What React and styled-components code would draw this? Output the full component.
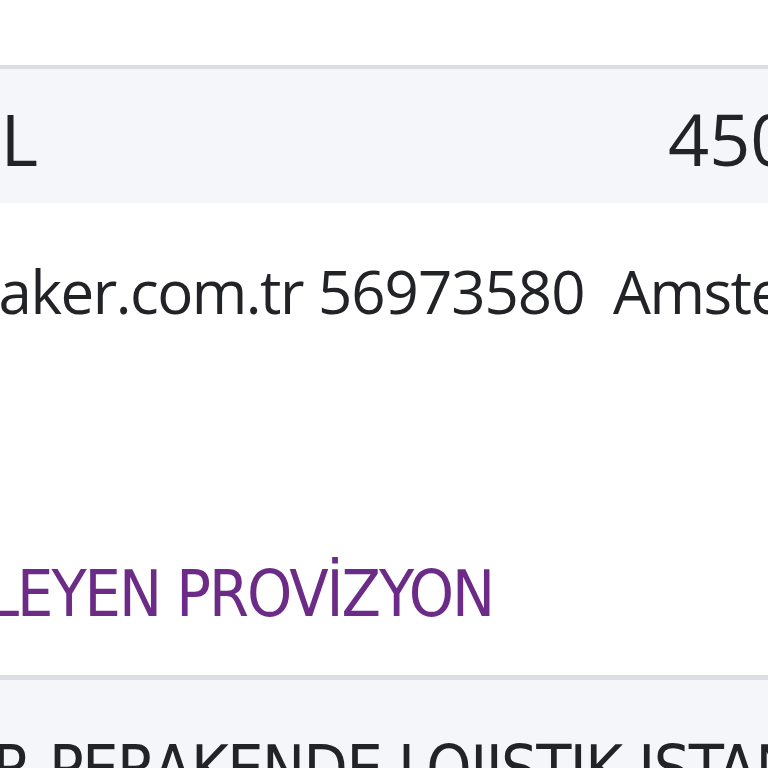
import React from "react";
import styled, { createGlobalStyle } from "styled-components";

const GlobalStyle = createGlobalStyle`
  html, body { margin: 0; padding: 0; background: #ffffff; overflow: hidden; }
  body { font-family: "Open Sans", "Noto Sans", sans-serif; color: #222326; }
`;

const Table = styled.div`
  display: flex;
  flex-direction: column;
  width: 768px;
  overflow: hidden;
`;

const Row = styled.div`
  display: flex;
  flex-direction: column;
  background: ${(p) => (p.$shaded ? "#f5f6f9" : "#ffffff")};
  border-top: ${(p) => (p.$border ? `${p.$border}px solid #dcdee3` : "none")};
  padding: ${(p) => p.$pad || "0"};
  min-height: ${(p) => p.$minH || 0}px;
  box-sizing: border-box;
`;

const Line = styled.div`
  display: flex;
  align-items: baseline;
  white-space: pre;
  font-family: ${(p) =>
    p.$cond
      ? `"DejaVu Sans Condensed", "DejaVu Sans", sans-serif`
      : `"Open Sans", "Noto Sans", sans-serif`};
  font-stretch: ${(p) => (p.$cond ? "condensed" : "normal")};
  font-size: ${(p) => p.$size}px;
  line-height: ${(p) => p.$size}px;
  letter-spacing: ${(p) => p.$ls || 0}px;
  color: ${(p) => p.$color || "#222326"};
  margin-top: ${(p) => p.$mt || 0}px;
`;

/* a cell whose text is aligned to its right edge, so the start of the
   text runs off the left side of the visible crop */
const EndCell = styled.span`
  flex: 0 0 ${(p) => p.$end}px;
  width: ${(p) => p.$end}px;
  min-width: 0;
  display: flex;
  justify-content: flex-end;
  white-space: pre;
`;

const EndText = styled.span`
  flex: 0 0 auto;
  white-space: pre;
`;

const Cell = styled.span`
  flex: ${(p) => (p.$w ? `0 0 ${p.$w}px` : "0 0 auto")};
  min-width: 0;
  padding-left: ${(p) => p.$pl || 0}px;
  letter-spacing: ${(p) => (p.$ls != null ? `${p.$ls}px` : "inherit")};
  box-sizing: border-box;
  white-space: pre;
`;

export default function App() {
  return (
    <>
      <GlobalStyle />
      <Table>
        <Row $minH={65} />
        <Row $shaded $border={4} $pad="33px 0 29px">
          <Line $size={72}>
            <EndCell $end={38}>
              <EndText>TOPLAM TL</EndText>
            </EndCell>
            <Cell $pl={630}>4500,00 TL</Cell>
          </Line>
        </Row>
        <Row $pad="58px 0 49px">
          <Line $size={60} $ls={-1.5}>
            <EndCell $end={303}>
              <EndText>info@modamaker.com.tr</EndText>
            </EndCell>
            <Cell $w={310} $pl={15} $ls={-1}>56973580</Cell>
            <Cell>Amsterdam</Cell>
          </Line>
          <Line $cond $size={64} $ls={-2} $color="#6c2b86" $mt={241}>
            <EndCell $end={493}>
              <EndText>BEKLEYEN PROVİZYON</EndText>
            </EndCell>
          </Line>
        </Row>
        <Row $shaded $border={5} $pad="57px 0 40px">
          <Line $cond $size={64} $ls={-1.5} $color="#222326">
            <EndCell $end={31}>
              <EndText>YAPI MARKETLER</EndText>
            </EndCell>
            <Cell $pl={18}>PERAKENDE LOJISTIK ISTANBUL</Cell>
          </Line>
        </Row>
      </Table>
    </>
  );
}
